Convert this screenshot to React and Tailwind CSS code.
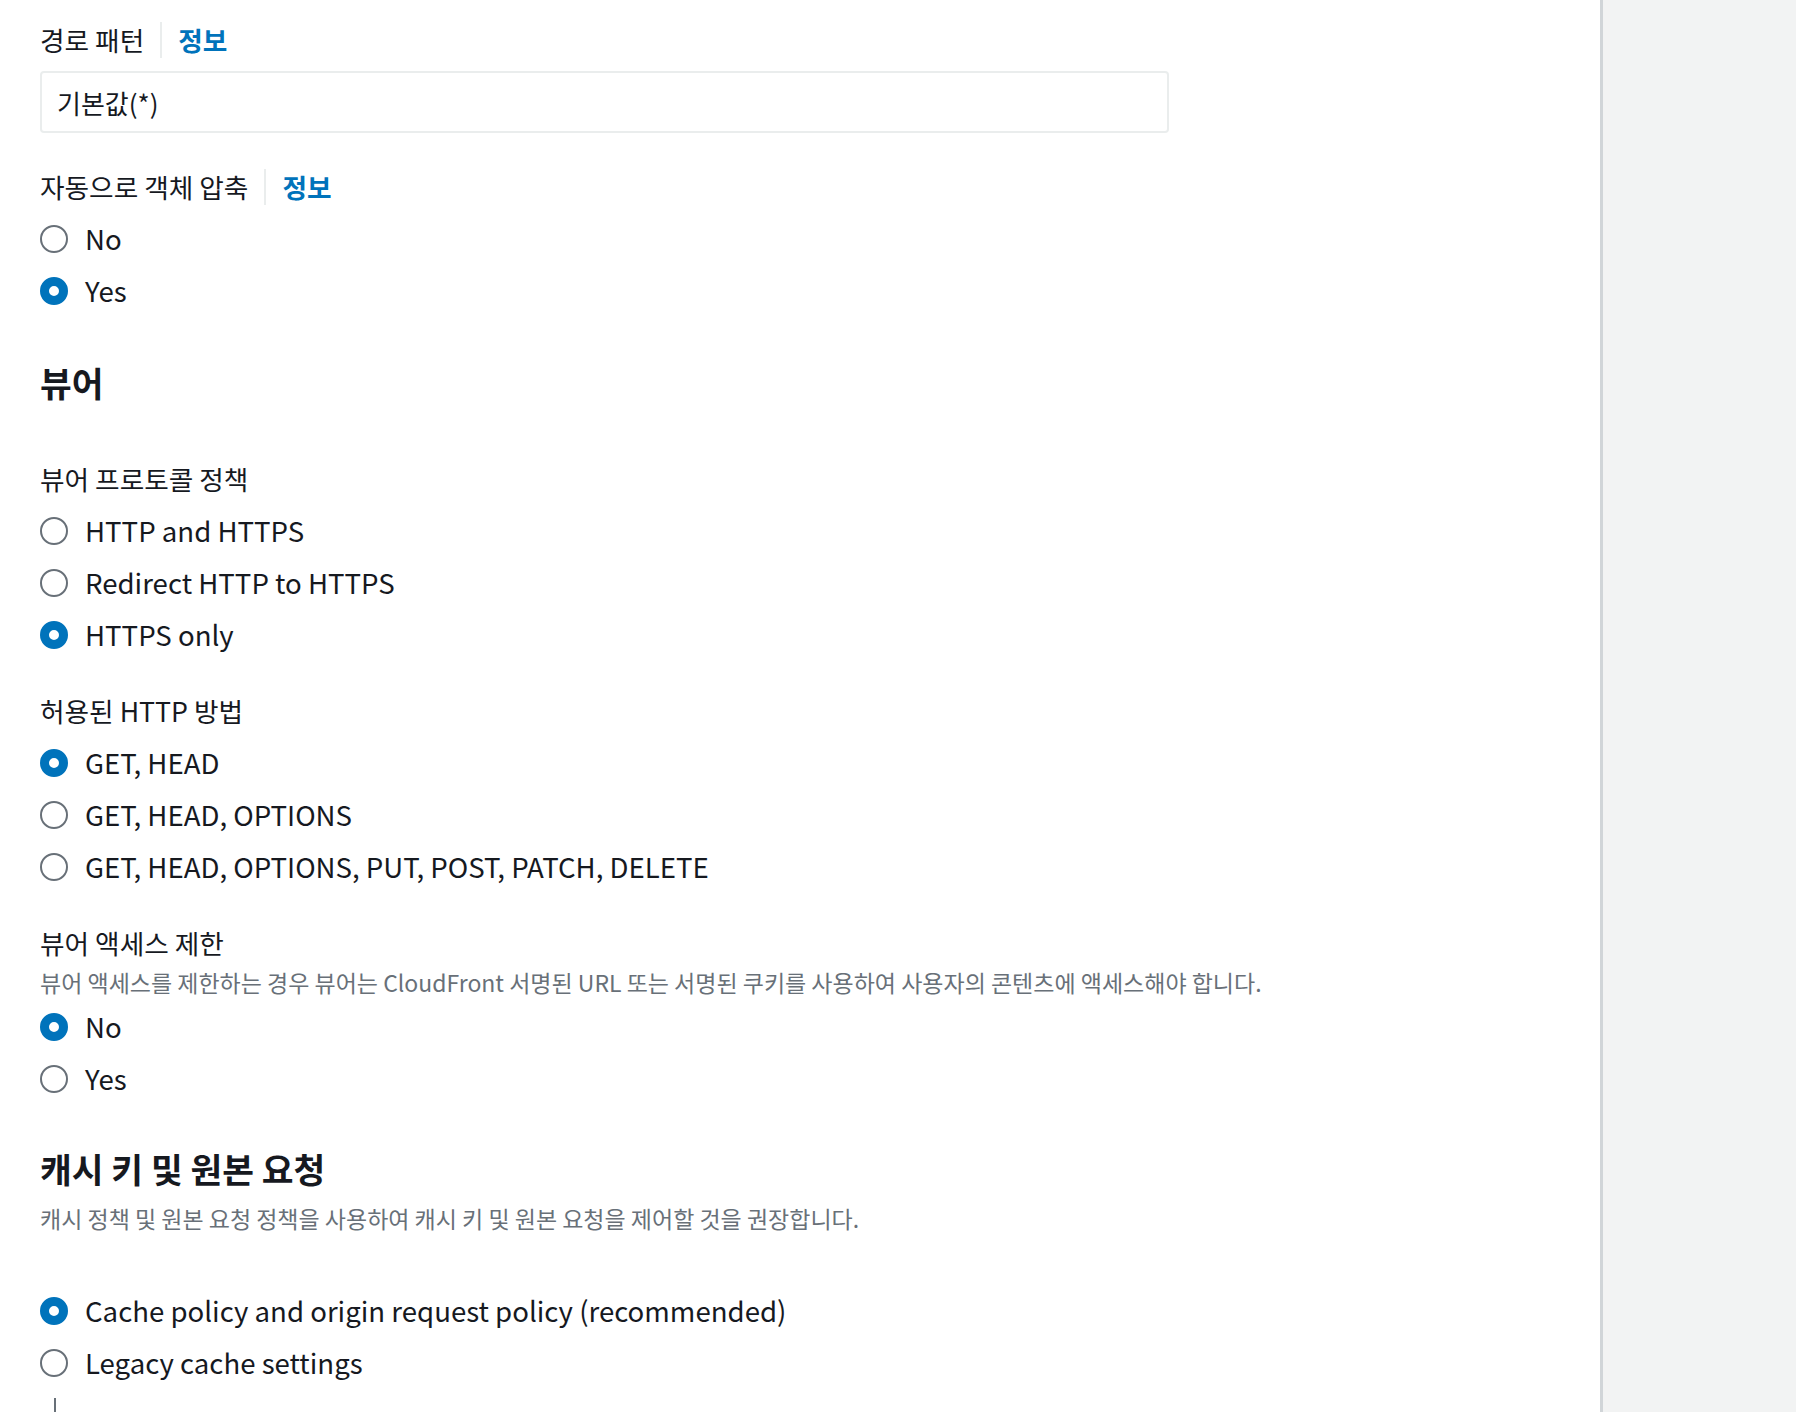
import { useState } from 'react'

const FONT = { fontFamily: '"Noto Sans CJK KR", "Noto Sans", sans-serif' }

function InfoLabel({ children, info }) {
  return (
    <div className="h-[40px] flex items-center text-[26.7px] text-[#16191f]">
      <span>{children}</span>
      {info && (
        <>
          <span className="ml-[16px] mr-[16px] w-[2px] h-[36px] bg-[#eaeded]" />
          <span className="font-bold text-[#0073bb]">정보</span>
        </>
      )}
    </div>
  )
}

function Radio({ checked, label, onSelect }) {
  return (
    <div className="h-[52px] flex items-center cursor-pointer" onClick={onSelect}>
      {checked ? (
        <span className="w-[28px] h-[28px] rounded-full border-[9px] border-[#0073bb] bg-white shrink-0" />
      ) : (
        <span className="w-[28px] h-[28px] rounded-full border-2 border-[#687078] bg-white shrink-0" />
      )}
      <span className="ml-[17px] text-[27.6px] text-[#16191f] leading-none">{label}</span>
    </div>
  )
}

function RadioGroup({ options, initial, className }) {
  const [value, setValue] = useState(initial)
  return (
    <div className={className}>
      {options.map((o, i) => (
        <Radio key={o} label={o} checked={value === i} onSelect={() => setValue(i)} />
      ))}
    </div>
  )
}

export default function App() {
  return (
    <div className="h-[1412px] flex overflow-hidden bg-white" style={FONT}>
      <div className="w-[1600px] shrink-0 pl-[40px] pt-[20px]">

        {/* 경로 패턴 */}
        <InfoLabel info>경로 패턴</InfoLabel>
        <div className="mt-[11px] w-[1129px] h-[62px] border-2 border-[#eaeded] rounded-[4px] flex items-center px-[15px] text-[26px] text-[#16191f]">
          기본값(*)
        </div>

        {/* 압축 */}
        <div className="mt-[34px]">
          <InfoLabel info>자동으로 객체 압축</InfoLabel>
        </div>
        <RadioGroup className="mt-[6px]" options={['No', 'Yes']} initial={1} />

        {/* 뷰어 */}
        <h2 className="mt-[42px] h-[48px] flex items-center text-[34.5px] font-bold text-[#16191f]">뷰어</h2>

        <div className="mt-[52px]">
          <InfoLabel>뷰어 프로토콜 정책</InfoLabel>
        </div>
        <RadioGroup
          className="mt-[6px]"
          options={['HTTP and HTTPS', 'Redirect HTTP to HTTPS', 'HTTPS only']}
          initial={2}
        />

        <div className="mt-[30px]">
          <InfoLabel>허용된 HTTP 방법</InfoLabel>
        </div>
        <RadioGroup
          className="mt-[6px]"
          options={['GET, HEAD', 'GET, HEAD, OPTIONS', 'GET, HEAD, OPTIONS, PUT, POST, PATCH, DELETE']}
          initial={0}
        />

        <div className="mt-[30px]">
          <InfoLabel>뷰어 액세스 제한</InfoLabel>
        </div>
        <p className="mt-[3px] h-[32px] flex items-center text-[23px] text-[#687078]">
          뷰어 액세스를 제한하는 경우 뷰어는 CloudFront 서명된 URL 또는 서명된 쿠키를 사용하여 사용자의 콘텐츠에 액세스해야 합니다.
        </p>
        <RadioGroup className="mt-[3px]" options={['No', 'Yes']} initial={0} />

        {/* 캐시 키 */}
        <h2 className="mt-[40px] h-[48px] flex items-center text-[34.5px] font-bold text-[#16191f]">캐시 키 및 원본 요청</h2>
        <p className="mt-[9px] h-[32px] flex items-center text-[23px] text-[#687078]">
          캐시 정책 및 원본 요청 정책을 사용하여 캐시 키 및 원본 요청을 제어할 것을 권장합니다.
        </p>
        <RadioGroup
          className="mt-[51px]"
          options={['Cache policy and origin request policy (recommended)', 'Legacy cache settings']}
          initial={0}
        />
        <div className="mt-[9px] ml-[14px] w-[2px] h-[40px] bg-[#687078]" />
      </div>

      <div className="flex-1 bg-[#f2f3f3] border-l-[3px] border-[#d1d5d8]" />
    </div>
  )
}
